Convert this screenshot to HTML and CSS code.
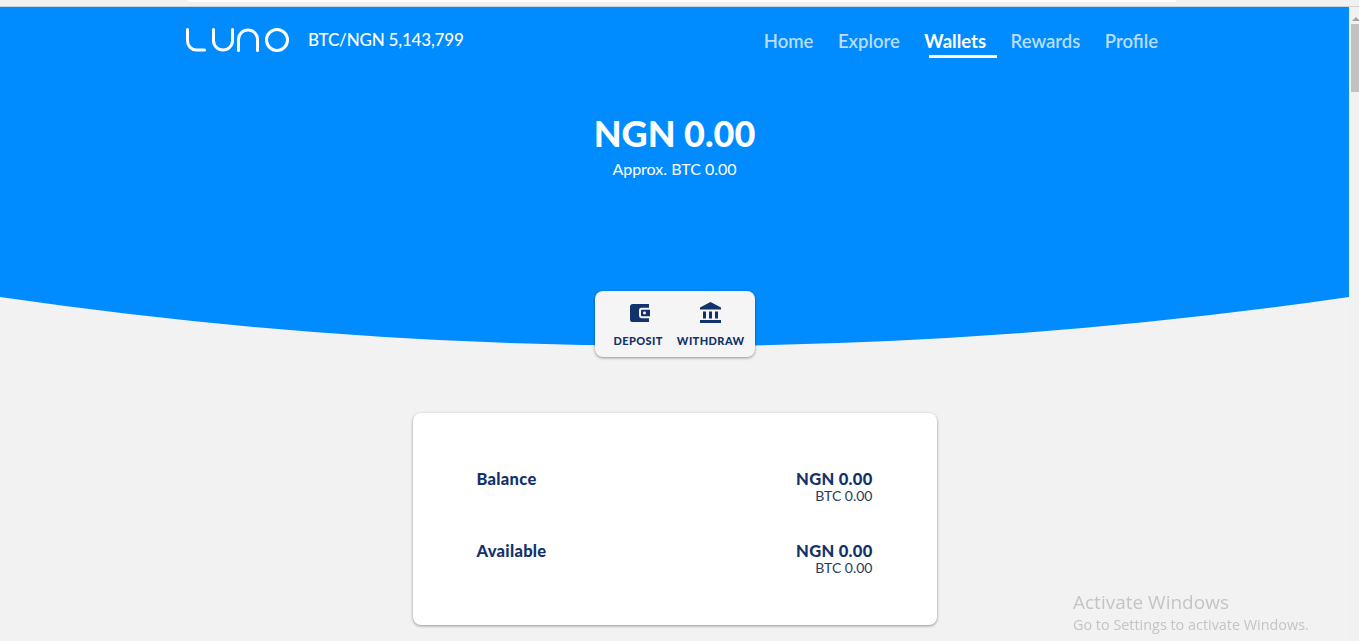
FILE: index.html
```html
<!DOCTYPE html>
<html lang="en">
<head>
    <meta charset="UTF-8">
    <meta name="viewport" content="width=device-width, initial-scale=1.0">
    <title>Luno Wallets</title>
    <link rel="stylesheet" href="styles.css">
</head>
<body>
    <div class="browser-strip"><div class="browser-tab"></div></div>

    <div class="shell">
        <main class="page">
            <header class="hero">
                <div class="topbar">
                    <div class="brand">
                        <svg class="logo" width="104" height="24" viewBox="0 0 104 24" fill="none" stroke="#fff" stroke-width="3" stroke-linecap="round">
                            <path d="M1.5 1.5V13a9 9 0 0 0 9 9H18.5"/>
                            <path d="M27.5 1.5V12.5a9.5 9.5 0 0 0 19 0V1.5"/>
                            <path d="M52.5 22.5V11.5a9.5 9.5 0 0 1 19 0V22.5"/>
                            <circle cx="91" cy="12" r="10.5"/>
                        </svg>
                        <span class="ticker">BTC/NGN 5,143,799</span>
                    </div>
                    <nav class="nav">
                        <a class="nav-link">Home</a>
                        <a class="nav-link">Explore</a>
                        <a class="nav-link active">Wallets</a>
                        <a class="nav-link">Rewards</a>
                        <a class="nav-link">Profile</a>
                    </nav>
                </div>
                <div class="summary">
                    <div class="summary-amount">NGN 0.00</div>
                    <div class="summary-approx">Approx. BTC 0.00</div>
                </div>
            </header>

            <!-- bottom edge of the blue header -->
            <svg class="curve" width="1349" height="49" viewBox="0 0 1349 49" preserveAspectRatio="none">
                <path d="M0 0H1349Q674.5 98 0 0Z" fill="#008cff"/>
            </svg>

            <div class="actions">
                <a class="action action-deposit">
                    <svg width="20" height="18" viewBox="0 0 20 19" preserveAspectRatio="none">
                        <path fill="#12326b" fill-rule="evenodd" d="M3 0H19V4H11.5A2.5 2.5 0 0 0 9 6.5V12.5A2.5 2.5 0 0 0 11.5 15H19V19H3A3 3 0 0 1 0 16V3A3 3 0 0 1 3 0ZM12 6H20V13H12A1 1 0 0 1 11 12V7A1 1 0 0 1 12 6ZM14.5 8A1.5 1.5 0 1 0 14.5 11 1.5 1.5 0 0 0 14.5 8Z"/>
                    </svg>
                    <span>Deposit</span>
                </a>
                <a class="action action-withdraw">
                    <svg width="21" height="21" viewBox="0 0 21 21" fill="#12326b">
                        <path d="M10.5 0L21 5.5V7.5H0V5.5Z"/>
                        <rect x="3" y="9.5" width="3" height="7"/>
                        <rect x="9" y="9.5" width="3" height="7"/>
                        <rect x="15" y="9.5" width="3" height="7"/>
                        <rect x="0" y="18" width="21" height="3"/>
                    </svg>
                    <span>Withdraw</span>
                </a>
            </div>

            <section class="balances">
                <div class="balance-row">
                    <div class="balance-label">Balance</div>
                    <div class="balance-values">
                        <div class="balance-main">NGN 0.00</div>
                        <div class="balance-sub">BTC 0.00</div>
                    </div>
                </div>
                <div class="balance-row">
                    <div class="balance-label">Available</div>
                    <div class="balance-values">
                        <div class="balance-main">NGN 0.00</div>
                        <div class="balance-sub">BTC 0.00</div>
                    </div>
                </div>
            </section>
        </main>

        <aside class="scrollbar">
            <div class="scroll-arrow"></div>
            <div class="scroll-thumb"></div>
        </aside>
    </div>

    <div class="watermark">
        <div class="watermark-title">Activate Windows</div>
        <div class="watermark-text">Go to Settings to activate Windows.</div>
    </div>
</body>
</html>
```

FILE: styles.css
```css
html, body {
    height: 100%;
}

body {
    margin: 0;
    overflow: hidden;
    font-family: Lato, "Open Sans", sans-serif;
    background-color: #f2f2f2;
    color: #12326b;
}

.browser-strip {
    height: 6px;
    padding-left: 188px;
    background-color: #f1f1f1;
    border-bottom: 1px solid #d2d2d2;
}

.browser-tab {
    width: 988px;
    height: 2px;
    background-color: #fff;
    border-radius: 0 0 0 3px;
}

.shell {
    display: flex;
    height: 634px;
}

.page {
    flex: 1;
    min-width: 0;
}

.scrollbar {
    width: 10px;
    background-color: #f1f1f1;
    padding-top: 10px;
}

.scroll-arrow {
    width: 0;
    height: 0;
    margin-left: 3px;
    border-left: 4px solid transparent;
    border-right: 4px solid transparent;
    border-bottom: 4px solid #a3a3a3;
}

.scroll-thumb {
    width: 8px;
    height: 68px;
    margin: 3px 0 0 2px;
    background-color: #c1c1c1;
}

.hero {
    height: 290px;
    background-color: #008cff;
    color: #fff;
}

.topbar {
    display: flex;
    justify-content: space-between;
    align-items: flex-start;
    padding: 21px 191px 0 186px;
}

.brand {
    display: flex;
    align-items: center;
    gap: 18px;
}

.logo {
    display: block;
}

.ticker {
    font-size: 17px;
    line-height: 24px;
    font-weight: 500;
    letter-spacing: -0.2px;
}

.nav {
    display: flex;
    gap: 24.5px;
    margin-top: 1px;
}

.nav-link {
    position: relative;
    font-size: 18.5px;
    line-height: 24px;
    font-weight: 600;
    color: rgba(255, 255, 255, 0.72);
}

.nav-link.active {
    color: #fff;
    font-weight: 700;
}

.nav-link.active::after {
    content: "";
    position: absolute;
    left: 5px;
    right: -11px;
    top: 26px;
    height: 3px;
    background-color: #fff;
}

.summary {
    margin-top: 58px;
    text-align: center;
}

.summary-amount {
    font-size: 36px;
    line-height: 44px;
    font-weight: 900;
}

.summary-approx {
    margin-top: 2px;
    font-size: 16px;
    line-height: 24px;
}

.curve {
    display: block;
}

.actions {
    display: flex;
    box-sizing: border-box;
    width: 160px;
    height: 66px;
    margin: -55px auto 0;
    padding: 11px 10px 0 19px;
    justify-content: space-between;
    background-color: #f5f5f5;
    border-radius: 8px;
    box-shadow: 0 1px 3px rgba(0, 0, 0, 0.4);
    position: relative;
}

.action {
    display: flex;
    flex-direction: column;
    align-items: center;
    font-size: 11px;
    line-height: 14px;
    font-weight: 900;
    letter-spacing: 0.4px;
    text-transform: uppercase;
}

.action svg {
    display: block;
}

.action-deposit span {
    margin-top: 12px;
}

.action-deposit svg {
    margin: 2px 0 0 4px;
}

.action-withdraw span {
    margin-top: 11px;
}

.balances {
    box-sizing: border-box;
    width: 524px;
    height: 212px;
    margin: 56px auto 0;
    padding: 57px 64px 0;
    background-color: #fff;
    border-radius: 8px;
    box-shadow: 0 1px 3px rgba(0, 0, 0, 0.4);
}

.balance-row {
    display: flex;
    justify-content: space-between;
    height: 72px;
}

.balance-label,
.balance-main {
    font-size: 16.5px;
    line-height: 19px;
    font-weight: 900;
    letter-spacing: 0.3px;
}

.balance-values {
    text-align: right;
}

.balance-sub {
    font-size: 14px;
    line-height: 14px;
    font-weight: 400;
    color: #2a3c5e;
}

.watermark {
    position: fixed;
    left: 1073px;
    top: 590px;
    color: #c4c4c4;
    font-family: "Open Sans", sans-serif;
}

.watermark-title {
    font-size: 19px;
    line-height: 25px;
}

.watermark-text {
    font-size: 14.4px;
    line-height: 20px;
}
```
